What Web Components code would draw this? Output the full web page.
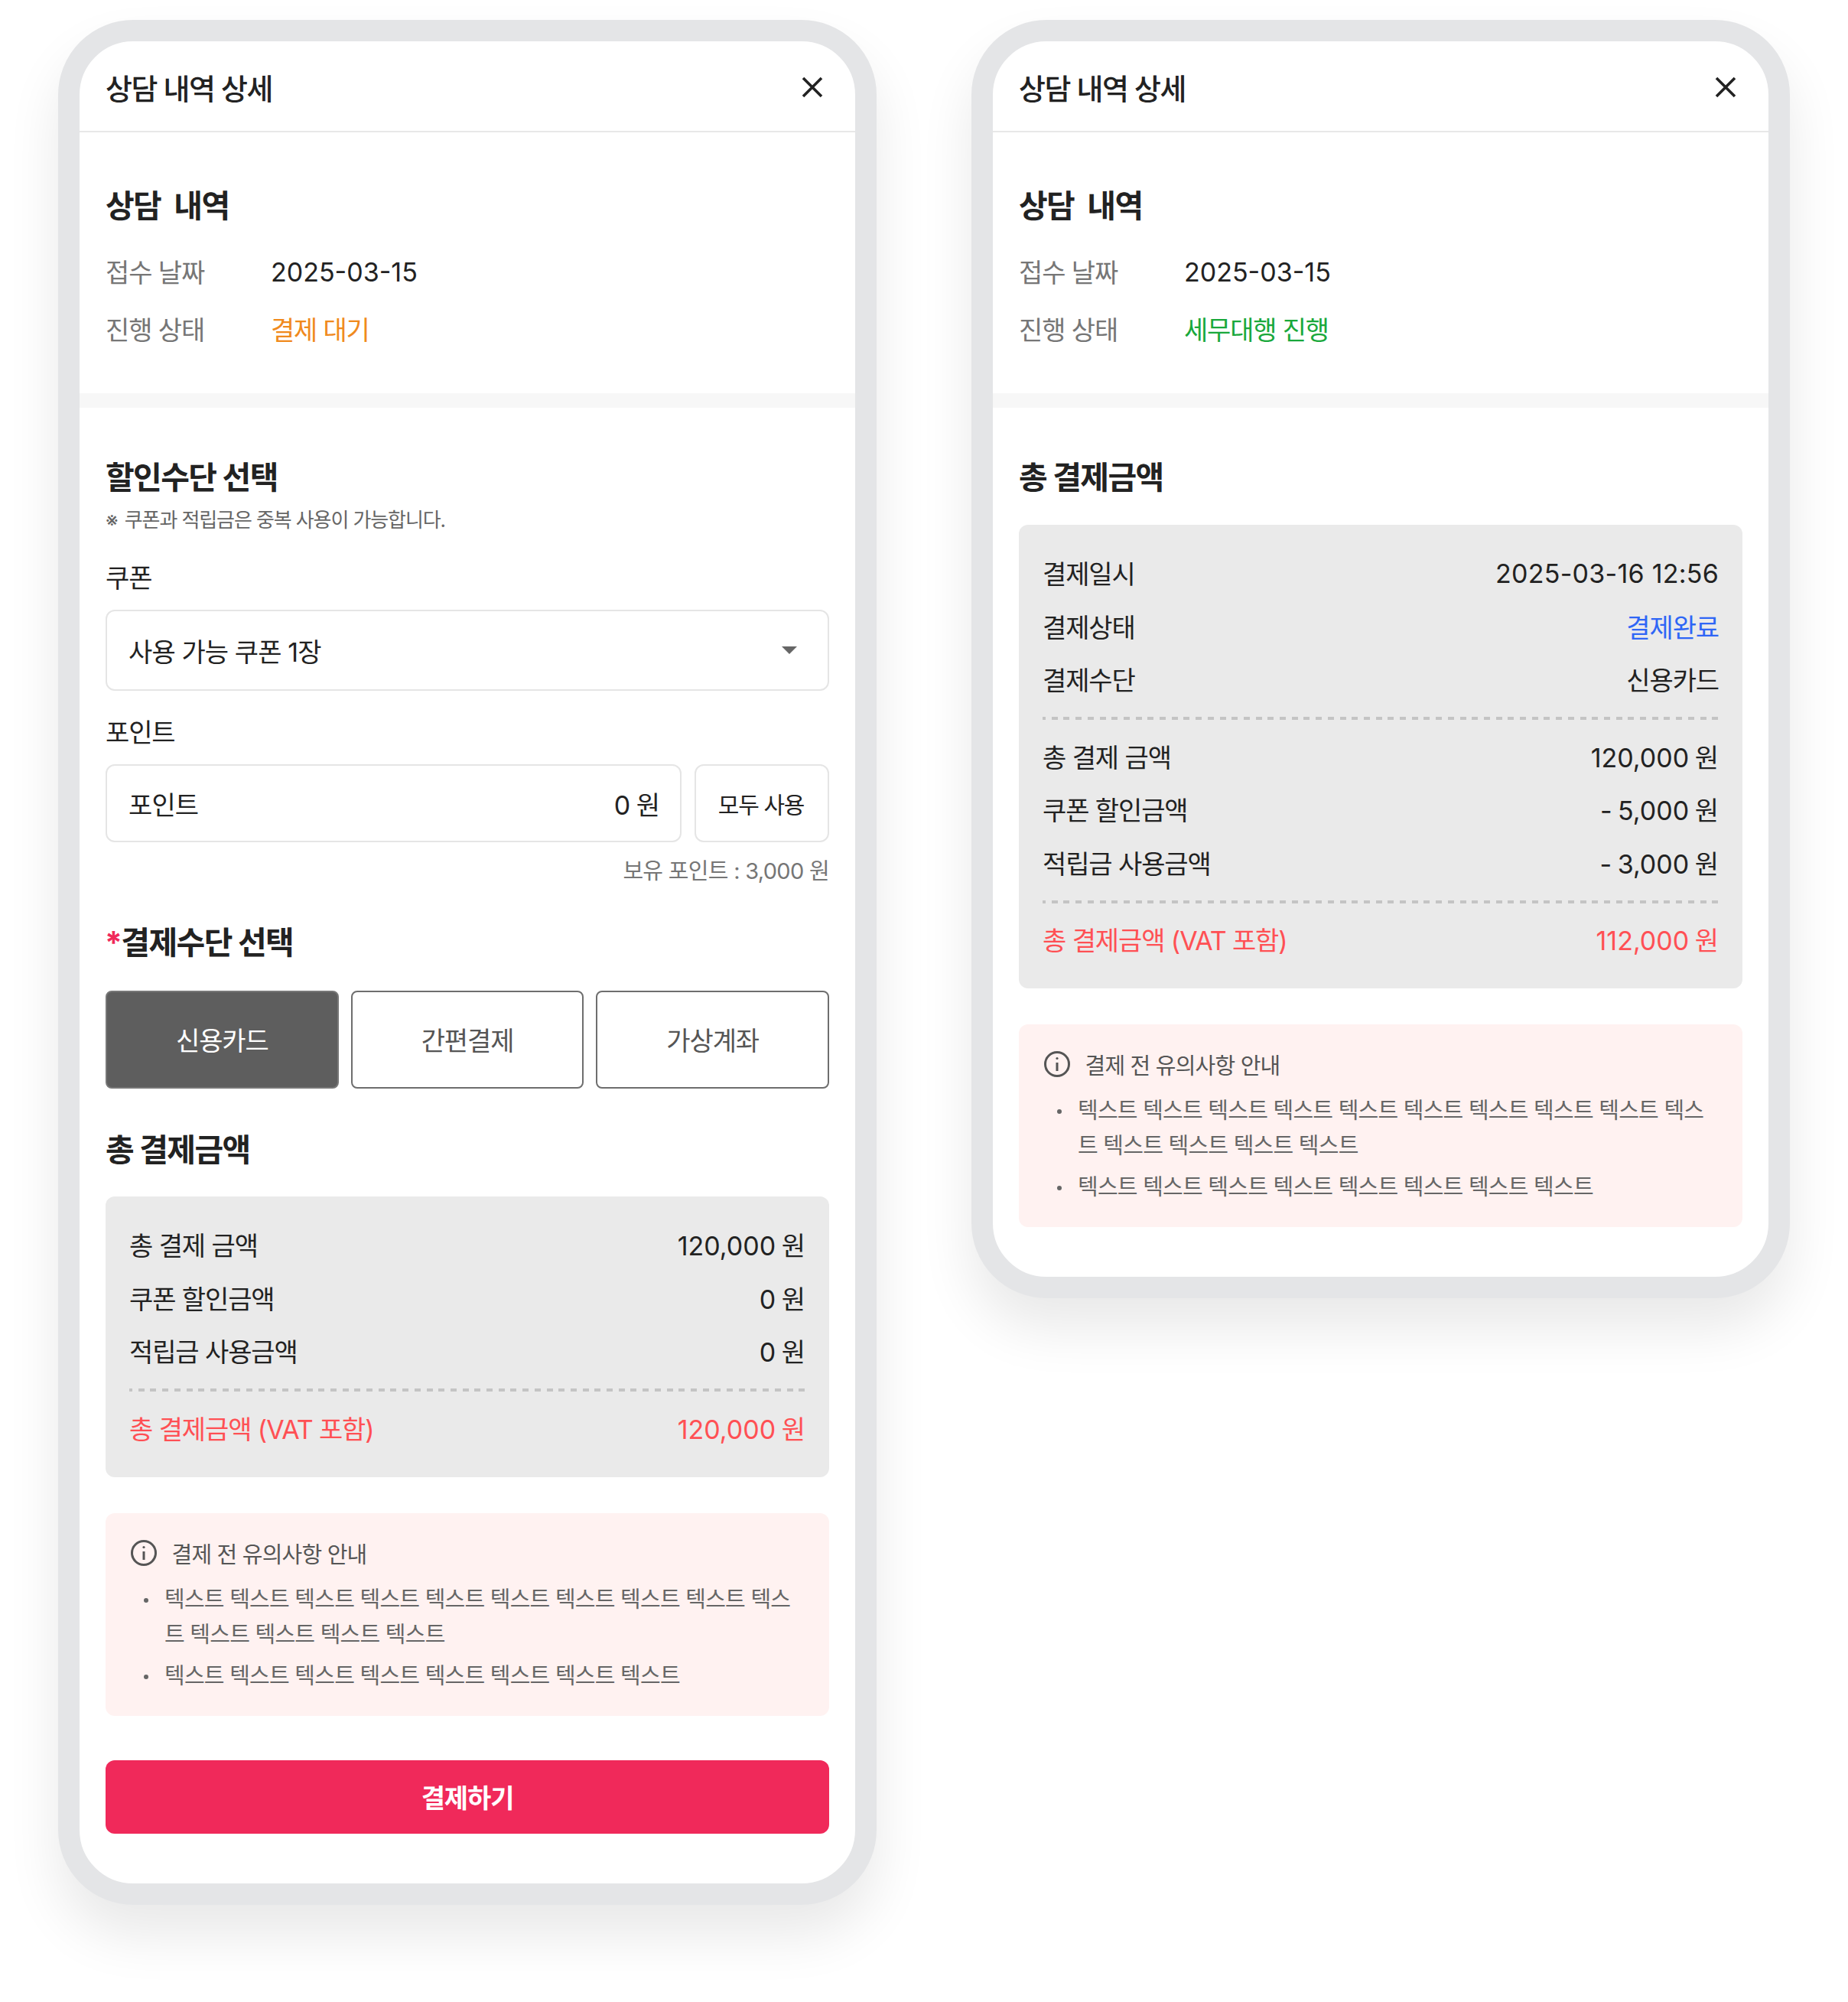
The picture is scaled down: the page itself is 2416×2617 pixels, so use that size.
<!DOCTYPE html>
<html lang="ko">
<head>
<meta charset="utf-8">
<title>상담 내역 상세</title>
<style>
  html, body { margin: 0; background: #fff; }
  body {
    width: 2416px;
    height: 2617px;
    overflow: hidden;
    font-family: Inter, "Noto Sans CJK KR", sans-serif;
    color: #222;
  }
  .page { display: flex; align-items: flex-start; gap: 124px; padding: 26px 0 0 76px; }
</style>
</head>
<body>
<div class="page">
  <phone-frame>
    <detail-header title="상담 내역 상세"></detail-header>
    <consult-info status="결제 대기" color="#f08a1d"></consult-info>
    <gray-band></gray-band>
    <section-body>
      <section-title top="0">할인수단 선택</section-title>
      <discount-form></discount-form>
      <section-title top="46"><span style="color:#f0295a;margin-left:-1px">*</span>결제수단 선택</section-title>
      <pay-methods></pay-methods>
      <section-title top="54">총 결제금액</section-title>
      <sum-box style="margin-top:37px;padding-bottom:29px">
        <sum-row label="총 결제 금액" value="120,000 원"></sum-row>
        <sum-row label="쿠폰 할인금액" value="0 원"></sum-row>
        <sum-row label="적립금 사용금액" value="0 원"></sum-row>
        <sum-dash></sum-dash>
        <sum-row label="총 결제금액 (VAT 포함)" value="120,000 원" color="#ff5054"></sum-row>
      </sum-box>
      <notice-box></notice-box>
      <pay-button>결제하기</pay-button>
    </section-body>
  </phone-frame>

  <phone-frame>
    <detail-header title="상담 내역 상세"></detail-header>
    <consult-info status="세무대행 진행" color="#19a83b"></consult-info>
    <gray-band></gray-band>
    <section-body>
      <section-title top="0">총 결제금액</section-title>
      <sum-box style="margin-top:38px;padding-bottom:28.5px">
        <sum-row label="결제일시" value="2025-03-16 12:56"></sum-row>
        <sum-row label="결제상태" value="결제완료" value-color="#2f66f6"></sum-row>
        <sum-row label="결제수단" value="신용카드"></sum-row>
        <sum-dash></sum-dash>
        <sum-row label="총 결제 금액" value="120,000 원"></sum-row>
        <sum-row label="쿠폰 할인금액" value="- 5,000 원"></sum-row>
        <sum-row label="적립금 사용금액" value="- 3,000 원"></sum-row>
        <sum-dash></sum-dash>
        <sum-row label="총 결제금액 (VAT 포함)" value="112,000 원" color="#ff5054"></sum-row>
      </sum-box>
      <notice-box></notice-box>
    </section-body>
  </phone-frame>
</div>

<script>
const fontStack = 'Inter, "Noto Sans CJK KR", sans-serif';

// small helper so each element stays a few lines
function define(name, css, html, extra) {
  class El extends HTMLElement {
    constructor() {
      super();
      this.attachShadow({ mode: "open" });
    }
    connectedCallback() {
      const body = typeof html === "function" ? html(this) : html;
      this.shadowRoot.innerHTML = `<style>${css}</style>${body}`;
      if (extra) extra(this);
    }
  }
  customElements.define(name, El);
}

define("phone-frame", `
  :host {
    display: block;
    box-sizing: border-box;
    width: 1070px;
    border: 28px solid #e4e5e7;
    border-radius: 98px;
    background: #fff;
    box-shadow: 0 40px 70px rgba(0,0,0,.09);
    overflow: hidden;
    font-family: ${fontStack};
  }
`, `<slot></slot>`);

define("detail-header", `
  :host {
    display: flex;
    align-items: center;
    justify-content: space-between;
    box-sizing: border-box;
    height: 119px;
    padding: 2px 39px 0 34px;
    border-bottom: 2px solid #e8e8e8;
  }
  h1 { margin: 0; font-size: 38px; font-weight: 500; letter-spacing: -1.5px; color: #222; }
  svg { display: block; }
`, (el) => `
  <h1>${el.getAttribute("title")}</h1>
  <svg width="34" height="34" viewBox="0 0 34 34" fill="none" stroke="#222" stroke-width="3.6">
    <path d="M5 5 29 29M29 5 5 29"/>
  </svg>
`);

define("consult-info", `
  :host { display: block; padding: 71px 34px 0; height: 341px; box-sizing: border-box; }
  h2 { margin: 0 0 23.5px; font-size: 41px; line-height: 50px; font-weight: 700; letter-spacing: -1.6px; word-spacing: 9px; color: #222; }
  .row { display: flex; height: 75px; align-items: center; font-size: 34px; }
  .k { width: 216px; margin-bottom: 2px; color: #767676; letter-spacing: -1.1px; }
  .v { color: #222; }
  .kr { margin-bottom: 2px; letter-spacing: -1.2px; }
`, (el) => `
  <h2>상담 내역</h2>
  <div class="row"><span class="k">접수 날짜</span><span class="v">2025-03-15</span></div>
  <div class="row"><span class="k">진행 상태</span><span class="v kr" style="color:${el.getAttribute("color")}">${el.getAttribute("status")}</span></div>
`);

define("gray-band", `:host { display: block; height: 19px; background: #f7f7f7; }`, ``);

define("section-body", `
  :host { display: block; padding: 65px 34px; }
`, `<slot></slot>`);

define("section-title", `
  :host { display: block; padding-top: 3px; font-size: 41px; line-height: 47px; font-weight: 700; letter-spacing: -1.6px; color: #222; }
`, `<slot></slot>`, (el) => {
  el.style.marginTop = (el.getAttribute("top") || 0) + "px";
});

define("discount-form", `
  :host { display: block; }
  .note { margin-top: 11.5px; font-size: 26px; line-height: 40px; color: #666; letter-spacing: -1.1px; }
  .note b { font-weight: 400; margin-right: 3px; }
  label { display: block; font-size: 34px; line-height: 46px; color: #222; letter-spacing: -1.1px; }
  .field {
    box-sizing: border-box;
    display: flex;
    align-items: center;
    justify-content: space-between;
    border: 2px solid #e5e5e5;
    border-radius: 12px;
    padding: 0 28px;
    font-size: 34px;
    color: #222;
  }
  .kr { letter-spacing: -.9px; }
  .select { height: 106px; margin-top: 18.5px; }
  .points { display: flex; gap: 17px; margin-top: 18px; }
  .points .field { height: 102px; }
  .points .input { flex: 1; padding-right: 26px; }
  .points .input .num { word-spacing: -2px; }
  .points .all { width: 176px; justify-content: center; padding: 0 2px 0 0; font-size: 30px; letter-spacing: -1.3px; }
  .have { margin-top: 17px; text-align: right; font-size: 29px; line-height: 42px; color: #767676; letter-spacing: -.7px; }
  svg { display: block; }
`, `
  <div class="note"><b>※</b> 쿠폰과 적립금은 중복 사용이 가능합니다.</div>
  <label style="margin-top:33px">쿠폰</label>
  <div class="field select">
    <span class="kr">사용 가능 쿠폰 1장</span>
    <svg width="20" height="10" viewBox="0 0 20 10" style="margin-right:12px"><path d="M0 0h20L10 10z" fill="#666"/></svg>
  </div>
  <label style="margin-top:32px">포인트</label>
  <div class="points">
    <div class="field input"><span class="kr">포인트</span><span class="num">0 원</span></div>
    <div class="field all">모두 사용</div>
  </div>
  <div class="have">보유 포인트 : 3,000 원</div>
`);

define("pay-methods", `
  :host { display: flex; gap: 16px; margin-top: 39px; }
  div {
    flex: 1;
    box-sizing: border-box;
    height: 128px;
    padding-bottom: 2px;
    display: flex;
    align-items: center;
    justify-content: center;
    border: 2px solid #6e6e6e;
    border-radius: 8px;
    font-size: 34px;
    letter-spacing: -1.1px;
    color: #555;
  }
  .on { background: #5e5e5e; border-color: #777; color: #fff; }
`, `<div class="on">신용카드</div><div>간편결제</div><div>가상계좌</div>`);

define("sum-box", `
  :host { display: block; padding: 29px 31px; background: #eaeaea; border-radius: 12px; }
`, `<slot></slot>`);

define("sum-row", `
  :host { display: flex; box-sizing: border-box; justify-content: space-between; align-items: center; height: 69.5px; padding-bottom: 2.5px; font-size: 34px; color: #222; }
  .kr { letter-spacing: -1.1px; }
  .num { word-spacing: -2px; }
  .stamp { letter-spacing: .25px; margin-bottom: -2.5px; }
`, (el) => {
  const c = el.getAttribute("color") || "#222";
  const vc = el.getAttribute("value-color") || c;
  const val = el.getAttribute("value");
  const cls = val.includes(":") ? "stamp" : /\d/.test(val) ? "num" : "kr";
  return `<span class="kr" style="color:${c}">${el.getAttribute("label")}</span><span class="${cls}" style="color:${vc}">${val}</span>`;
});

define("sum-dash", `
  :host {
    display: block;
    margin: 13.5px 0;
    height: 4px;
    background: repeating-linear-gradient(90deg, #c4c4c4 0 4px, transparent 4px 11.7px, #c4c4c4 11.7px 15.7px);
  }
`, ``);

define("notice-box", `
  :host {
    display: block;
    box-sizing: border-box;
    height: 265px;
    margin-top: 47px;
    padding: 27.5px 30px 0 32px;
    background: #fff2f1;
    border-radius: 12px;
    color: #666;
  }
  .head { display: flex; align-items: center; gap: 18.5px; font-size: 29px; line-height: 54px; letter-spacing: -.8px; color: #555; }
  svg { display: block; margin-bottom: 6px; }
  ul { margin: 8px 0 0; padding: 0 0 0 45px; list-style: none; font-size: 29px; line-height: 46px; letter-spacing: -.76px; }
  li { position: relative; }
  li + li { margin-top: 8px; }
  li::before { content: ""; position: absolute; left: -27px; top: 21px; width: 6px; height: 6px; border-radius: 50%; background: #666; }
`, `
  <div class="head">
    <svg width="36" height="36" viewBox="0 0 36 36" fill="none" stroke="#555" stroke-width="3">
      <circle cx="18" cy="18" r="15.5"/><path d="M18 16v11"/><circle cx="18" cy="10.5" r="1.6" fill="#555" stroke="none"/>
    </svg>
    <span>결제 전 유의사항 안내</span>
  </div>
  <ul>
    <li>텍스트 텍스트 텍스트 텍스트 텍스트 텍스트 텍스트 텍스트 텍스트 텍스트 텍스트 텍스트 텍스트 텍스트</li>
    <li>텍스트 텍스트 텍스트 텍스트 텍스트 텍스트 텍스트 텍스트</li>
  </ul>
`);

define("pay-button", `
  :host {
    display: flex;
    box-sizing: border-box;
    align-items: center;
    justify-content: center;
    height: 96px;
    padding-bottom: 2px;
    margin-top: 58px;
    background: #f0295a;
    border-radius: 12px;
    color: #fff;
    font-size: 34px;
    font-weight: 700;
    letter-spacing: -1.1px;
  }
`, `<slot></slot>`);
</script>
</body>
</html>
